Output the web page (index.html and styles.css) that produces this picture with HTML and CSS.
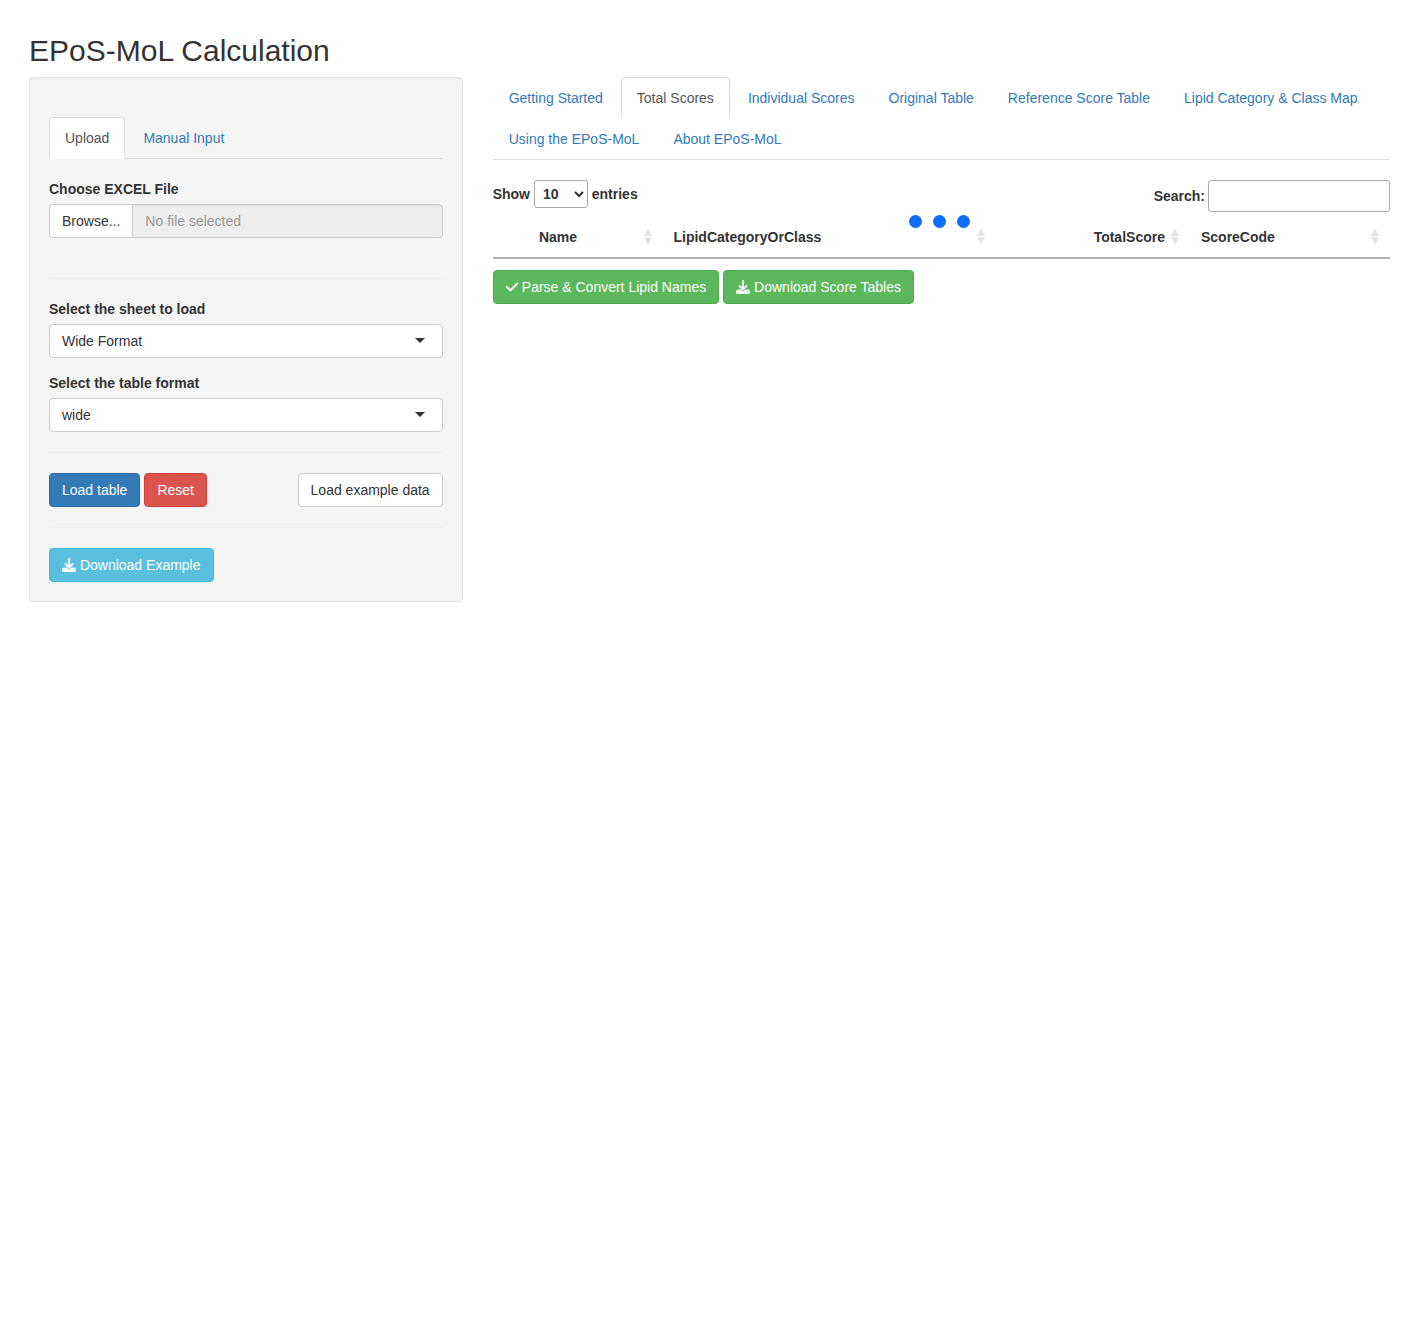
FILE: index.html
```html
<!DOCTYPE html>
<html lang="en">
<head>
<meta charset="utf-8">
<title>EPoS-MoL Calculation</title>
<link rel="stylesheet" href="styles.css">
</head>
<body>
<svg class="sprite" aria-hidden="true">
  <symbol id="download" viewBox="0 0 512 512"><path d="M288 32c0-17.7-14.3-32-32-32s-32 14.3-32 32V274.7l-73.4-73.4c-12.5-12.5-32.8-12.5-45.3 0s-12.5 32.8 0 45.3l128 128c12.5 12.5 32.8 12.5 45.3 0l128-128c12.5-12.5 12.5-32.8 0-45.3s-32.8-12.5-45.3 0L288 274.7V32zM64 352c-35.3 0-64 28.7-64 64v32c0 35.3 28.7 64 64 64H448c35.3 0 64-28.7 64-64V416c0-35.3-28.7-64-64-64H346.5l-45.3 45.3c-25 25-65.5 25-90.5 0L165.5 352H64zm368 56a24 24 0 1 1 0 48 24 24 0 1 1 0-48z"/></symbol>
  <symbol id="check" viewBox="0 0 448 512"><path d="M438.6 105.4c12.5 12.5 12.5 32.8 0 45.3l-256 256c-12.5 12.5-32.8 12.5-45.3 0l-128-128c-12.5-12.5-12.5-32.8 0-45.3s32.8-12.5 45.3 0L160 338.7 393.4 105.4c12.5-12.5 32.8-12.5 45.3 0z"/></symbol>
  <symbol id="sort" viewBox="0 0 8 17"><path d="M4 0.5L8 8H0zM0 9.3H8L4 16.8z"/></symbol>
</svg>
<h2 class="title">EPoS-MoL Calculation</h2>
<div class="layout">
  <form class="sidebar">
    <ul class="tabs">
      <li><a class="tab active">Upload</a></li>
      <li><a class="tab">Manual Input</a></li>
    </ul>
    <div class="field file-field">
      <label>Choose EXCEL File</label>
      <div class="file-input">
        <span class="browse">Browse...</span>
        <span class="file-name">No file selected</span>
      </div>
    </div>
    <hr>
    <div class="field">
      <label>Select the sheet to load</label>
      <div class="picker">Wide Format<span class="caret"></span></div>
    </div>
    <div class="field">
      <label>Select the table format</label>
      <div class="picker">wide<span class="caret"></span></div>
    </div>
    <hr>
    <div class="actions">
      <button type="button" class="btn primary">Load table</button>
      <button type="button" class="btn danger">Reset</button>
      <button type="button" class="btn plain push">Load example data</button>
    </div>
    <hr>
    <div class="actions">
      <button type="button" class="btn info"><svg class="icon"><use href="#download"/></svg> Download Example</button>
    </div>
  </form>
  <main class="main">
    <ul class="tabs">
      <li><a class="tab">Getting Started</a></li>
      <li><a class="tab active">Total Scores</a></li>
      <li><a class="tab">Individual Scores</a></li>
      <li><a class="tab">Original Table</a></li>
      <li><a class="tab">Reference Score Table</a></li>
      <li><a class="tab">Lipid Category &amp; Class Map</a></li>
      <li><a class="tab">Using the EPoS-MoL</a></li>
      <li><a class="tab">About EPoS-MoL</a></li>
    </ul>
    <div class="data-table">
      <div class="controls">
        <label class="length">Show <select><option>10</option><option>25</option></select> entries</label>
        <label class="search">Search:<input type="search"></label>
      </div>
      <div class="head">
        <span></span>
        <span class="cell">Name<svg class="sort"><use href="#sort"/></svg></span>
        <span class="cell">LipidCategoryOrClass<svg class="sort"><use href="#sort"/></svg></span>
        <span class="cell numeric">TotalScore<svg class="sort"><use href="#sort"/></svg></span>
        <span class="cell">ScoreCode<svg class="sort"><use href="#sort"/></svg></span>
      </div>
      <div class="loading"><i></i><i></i><i></i></div>
    </div>
    <div class="actions">
      <button type="button" class="btn success"><svg class="icon check"><use href="#check"/></svg> Parse &amp; Convert Lipid Names</button>
      <button type="button" class="btn success"><svg class="icon"><use href="#download"/></svg> Download Score Tables</button>
    </div>
  </main>
</div>
</body>
</html>
```
FILE: styles.css
```css
* { box-sizing: border-box; }
body {
  margin: 0;
  padding: 34px 29px 0;
  font: 14px/20px "Liberation Sans", Arial, sans-serif;
  color: #333;
  background: #fff;
}
.sprite { display: none; }
.title { margin: 0 0 10px; font-size: 30px; line-height: 33px; font-weight: normal; }
.layout { display: grid; grid-template-columns: 433.66px 1fr; gap: 30px; align-items: start; }

.sidebar {
  padding: 39px 19px 19px;
  background: #f5f5f5;
  border: 1px solid #e3e3e3;
  border-radius: 4px;
  box-shadow: inset 0 1px 1px rgba(0, 0, 0, .05);
}
hr { margin: 20px 0; border: 0; border-top: 1px solid #eee; }

.tabs {
  display: flex;
  flex-wrap: wrap;
  margin: 0 0 20px;
  padding: 0;
  list-style: none;
  border-bottom: 1px solid #ddd;
}
.tabs li { margin-bottom: -1px; }
.tab {
  display: block;
  margin-right: 2px;
  padding: 10px 15px;
  border: 1px solid transparent;
  border-radius: 4px 4px 0 0;
  color: #337ab7;
}
.tab.active { color: #555; background: #fff; border-color: #ddd #ddd transparent; }

.field { margin-bottom: 15px; }
.file-field { margin-bottom: 40px; }
label { font-weight: bold; }
.field label { display: block; margin-bottom: 5px; }
.file-input { display: flex; height: 34px; }
.browse, .file-name, .picker { padding: 6px 12px; border: 1px solid #ccc; background: #fff; }
.browse { border-radius: 4px 0 0 4px; border-right: 0; }
.file-name {
  flex: 1;
  color: #999;
  background: #eee;
  border-radius: 0 4px 4px 0;
  box-shadow: inset 0 1px 1px rgba(0, 0, 0, .075);
}
.picker {
  display: flex;
  align-items: center;
  justify-content: space-between;
  height: 34px;
  padding-right: 17px;
  border-radius: 4px;
}
.caret { margin-bottom: 1px; border: 5px solid transparent; border-top-color: #333; border-bottom: 0; }

.actions { display: flex; gap: 4px; }
.push { margin-left: auto; }
.btn {
  height: 34px;
  padding: 6px 12px;
  border: 1px solid;
  border-radius: 4px;
  font: inherit;
  color: #fff;
  white-space: nowrap;
}
.primary { background: #337ab7; border-color: #2e6da4; }
.danger { background: #d9534f; border-color: #d43f3a; }
.plain { color: #333; background: #fff; border-color: #ccc; }
.info { background: #5bc0de; border-color: #46b8da; }
.success { background: #5cb85c; border-color: #4cae4c; }
.icon {
  width: 14px;
  height: 14px;
  overflow: visible;
  fill: currentColor;
  stroke: currentColor;
  stroke-width: 8px;
  vertical-align: -0.125em;
}
.icon.check { width: 12.25px; stroke-width: 16px; }

.data-table { position: relative; margin-bottom: 11px; }
.controls { display: flex; justify-content: space-between; align-items: flex-start; height: 37px; }
.length select {
  width: 54px;
  height: 28px;
  padding: 4px;
  border: 1px solid #aaa;
  border-radius: 3px;
  font: inherit;
  color: inherit;
  background: transparent;
}
.search { display: flex; align-items: center; gap: 3px; }
.search input { width: 182px; height: 32px; padding: 5px; border: 1px solid #aaa; border-radius: 3px; background: transparent; }
.head {
  display: grid;
  grid-template-columns: 28.3px 134.5px 333px 194.5px 200px;
  height: 42px;
  border-bottom: 2px solid #b1b1b1;
  font-weight: bold;
}
.cell { display: flex; align-items: center; justify-content: space-between; padding: 0 3.5px 0 18px; }
.numeric { justify-content: flex-end; gap: 6.5px; }
.sort { width: 8px; height: 17px; margin-bottom: 2px; fill: #e3e3e3; }
/* Processing indicator floats over the table header. */
.loading { position: absolute; top: 35px; left: 416.6px; display: flex; gap: 11px; }
.loading i { width: 13px; height: 13px; border-radius: 50%; background: #0d6efd; }
```
